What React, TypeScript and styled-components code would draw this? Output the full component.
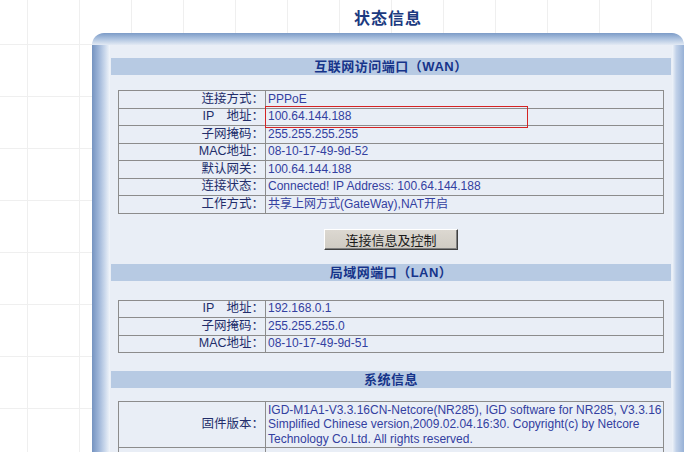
import React from 'react'
import styled, { createGlobalStyle } from 'styled-components'

const GlobalStyle = createGlobalStyle`
  html, body {
    margin: 0;
    padding: 0;
  }
  body {
    background-color: #ffffff;
    background-image:
      linear-gradient(to right, #efefef 1px, transparent 1px),
      linear-gradient(to bottom, #efefef 1px, transparent 1px);
    background-size: 52px 52px;
    background-position: 27px 44px;
    font-family: "Liberation Sans", "Noto Sans CJK SC", sans-serif;
  }
`

const Page = styled.div`
  width: 684px;
  height: 452px;
  overflow: hidden;
`

const Title = styled.h1`
  margin: 0 0 0 92px;
  height: 33px;
  padding-top: 8px;
  box-sizing: border-box;
  text-align: center;
  font-family: "Noto Sans CJK SC", sans-serif;
  font-size: 16px;
  line-height: 19px;
  font-weight: 700;
  letter-spacing: 1px;
  color: #1b3a80;
`

const Frame = styled.div`
  margin-left: 92px;
  display: flex;
  flex-direction: column;
`

const TopBar = styled.div`
  height: 12px;
  border-radius: 14px 14px 0 0;
  background: linear-gradient(to bottom, #7c9bc7 0%, #afc4e0 50%, #e3eaf4 100%);
`

const Body = styled.div`
  display: flex;
`

const Rail = styled.div<{ $side: 'left' | 'right' }>`
  flex: none;
  width: ${p => (p.$side === 'left' ? '18px' : '12px')};
  background: ${p =>
    p.$side === 'left'
      ? 'linear-gradient(to right, #7593c0 0%, #9bb3d7 35%, #cfdcee 75%, #f1f5fa 100%)'
      : 'linear-gradient(to right, #f1f5fa 0%, #c2d2e9 35%, #97b1d6 100%)'};
`

const Content = styled.div`
  flex: 1;
  background: #e9eef6;
  padding: 13px 1px 0;
  display: flex;
  flex-direction: column;
`

const Band = styled.div<{ $gap?: number }>`
  margin-top: ${p => p.$gap ?? 0}px;
  height: 17px;
  background: #b7cae3;
  text-align: center;
  font-family: "Liberation Sans", "Noto Sans CJK SC", sans-serif;
  font-size: 13px;
  line-height: 17px;
  font-weight: 700;
  letter-spacing: 0.5px;
  color: #16348a;
`

const InfoTable = styled.table<{ $gap: number }>`
  margin: ${p => p.$gap}px 7px 0;
  width: calc(100% - 14px);
  border-collapse: collapse;
  table-layout: fixed;
`

const Label = styled.td`
  width: 145px;
  height: 16.5px;
  padding: 0 1px 0 0;
  border: 1px solid #8c8c8c;
  text-align: right;
  font-size: 12.5px;
  line-height: 15px;
  color: #222d6a;
  white-space: nowrap;
`

const Value = styled.td`
  position: relative;
  height: 16.5px;
  padding: 0 0 0 2px;
  border: 1px solid #8c8c8c;
  font-size: 12px;
  line-height: 15px;
  color: #3340a0;
  white-space: nowrap;
`

const MultiValue = styled(Value)`
  height: 45px;
  line-height: 14.5px;
`

const Line = styled.span`
  display: block;
`

const Highlight = styled.span`
  position: absolute;
  left: -1px;
  top: -3px;
  width: 261px;
  height: 20px;
  border: 1px solid #d42424;
  pointer-events: none;
`

const ButtonRow = styled.div`
  margin-top: 15px;
  display: flex;
  justify-content: center;
`

const Button = styled.button`
  width: 134px;
  height: 21px;
  padding: 0;
  background: linear-gradient(to bottom, #dcd8d1, #cfcbc3);
  border: 1px solid;
  border-color: #ffffff #404040 #404040 #ffffff;
  box-shadow: inset -1px -1px 0 #808080;
  font-family: "Noto Sans CJK SC", sans-serif;
  font-size: 13px;
  line-height: 17px;
  color: #1a1a1a;
`

type Row = { label: string; value: string; mark?: boolean }

const wanRows: Row[] = [
  { label: '连接方式：', value: 'PPPoE' },
  { label: 'IP\u3000地址：', value: '100.64.144.188', mark: true },
  { label: '子网掩码：', value: '255.255.255.255' },
  { label: 'MAC地址：', value: '08-10-17-49-9d-52' },
  { label: '默认网关：', value: '100.64.144.188' },
  { label: '连接状态：', value: 'Connected! IP Address: 100.64.144.188' },
  { label: '工作方式：', value: '共享上网方式(GateWay),NAT开启' }
]

const lanRows: Row[] = [
  { label: 'IP\u3000地址：', value: '192.168.0.1' },
  { label: '子网掩码：', value: '255.255.255.0' },
  { label: 'MAC地址：', value: '08-10-17-49-9d-51' }
]

const firmware = [
  'IGD-M1A1-V3.3.16CN-Netcore(NR285), IGD software for NR285, V3.3.16',
  'Simplified Chinese version,2009.02.04.16:30. Copyright(c) by Netcore',
  'Technology Co.Ltd. All rights reserved.'
]

const Rows = ({ rows }: { rows: Row[] }) => (
  <tbody>
    {rows.map(r => (
      <tr key={r.label}>
        <Label>{r.label}</Label>
        <Value>
          {r.value}
          {r.mark && <Highlight />}
        </Value>
      </tr>
    ))}
  </tbody>
)

export default function App() {
  return (
    <Page>
      <GlobalStyle />
      <Title>状态信息</Title>
      <Frame>
        <TopBar />
        <Body>
          <Rail $side="left" />
          <Content>
            <Band>互联网访问端口（WAN）</Band>
            <InfoTable $gap={15}>
              <Rows rows={wanRows} />
            </InfoTable>
            <ButtonRow>
              <Button type="button">连接信息及控制</Button>
            </ButtonRow>
            <Band $gap={14}>局域网端口（LAN）</Band>
            <InfoTable $gap={19}>
              <Rows rows={lanRows} />
            </InfoTable>
            <Band $gap={18}>系统信息</Band>
            <InfoTable $gap={13}>
              <tbody>
                <tr>
                  <Label>固件版本：</Label>
                  <MultiValue>
                    {firmware.map(l => (
                      <Line key={l}>{l}</Line>
                    ))}
                  </MultiValue>
                </tr>
                <tr>
                  <Label>&nbsp;</Label>
                  <Value>&nbsp;</Value>
                </tr>
              </tbody>
            </InfoTable>
          </Content>
          <Rail $side="right" />
        </Body>
      </Frame>
    </Page>
  )
}
